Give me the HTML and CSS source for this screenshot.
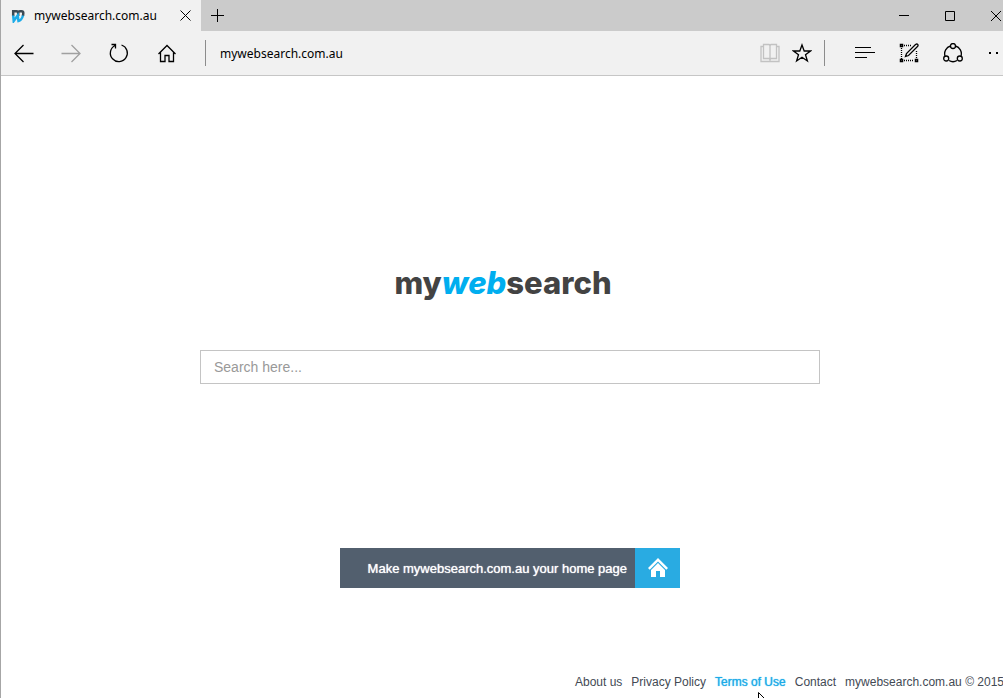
FILE: index.html
```html
<!DOCTYPE html>
<html lang="en">
<head>
  <meta charset="UTF-8">
  <meta name="viewport" content="width=device-width, initial-scale=1.0">
  <title>mywebsearch.com.au</title>
  <link rel="stylesheet" href="styles.css">
</head>
<body>
  <div class="window">
    <header>
      <div class="tab-bar">
        <div class="tab">
          <svg class="favicon" width="14" height="14" viewBox="0 0 14 14" fill="none" stroke-width="2.500">
            <path class="favicon-m" d="M2.200 7V2.200H5.500Q7.200 2.200 7.200 4V7M7.200 3.500Q7.500 2.200 9 2.200H10.500Q12.300 2.200 12.300 4L12 7"/>
            <path class="favicon-w" d="M2.200 6.500L2.700 12L6.700 6.500L7.500 12Q10.500 11.500 12 6.500"/>
          </svg>
          <span class="tab-title">mywebsearch.com.au</span>
          <button class="tab-close" aria-label="Close tab">
            <svg width="11" height="11" viewBox="0 0 11 11"><path d="M.5 .5L10.500 10.500M10.500 .5L.5 10.500"/></svg>
          </button>
        </div>
        <button class="new-tab" aria-label="New tab">
          <svg width="13" height="13" viewBox="0 0 13 13"><path d="M6.500 0V13M0 6.500H13"/></svg>
        </button>
        <div class="window-controls">
          <button aria-label="Minimize"><svg width="10" height="10" viewBox="0 0 10 10"><path d="M0 4.500H10"/></svg></button>
          <button aria-label="Maximize"><svg width="10" height="10" viewBox="0 0 10 10"><path d="M.5 .5H9.500V9.500H.5Z"/></svg></button>
          <button aria-label="Close"><svg width="10" height="10" viewBox="0 0 10 10"><path d="M0 0L10 10M10 0L0 10"/></svg></button>
        </div>
      </div>

      <div class="toolbar">
        <button class="nav-button" aria-label="Back">
          <svg width="20" height="20" viewBox="0 0 20 20"><path d="M19.500 10.500H1M9.500 2L1 10.500L9.500 19"/></svg>
        </button>
        <button class="nav-button disabled" aria-label="Forward" disabled>
          <svg width="20" height="20" viewBox="0 0 20 20"><path d="M.5 10.500H19M10.500 2L19 10.500L10.500 19"/></svg>
        </button>
        <button class="nav-button" aria-label="Refresh">
          <svg width="20" height="20" viewBox="0 0 20 20"><path d="M12.500 2A8.500 8.500 0 1 1 6 2.500M2.500 1.500H6.500V5.500"/></svg>
        </button>
        <button class="nav-button" aria-label="Home">
          <svg width="20" height="20" viewBox="0 0 20 20"><path d="M1.500 11L10 2.500L18.500 11M3.500 9V18.500H8V12.500H12V18.500H16.500V9"/></svg>
        </button>
        <span class="divider"></span>
        <input class="address" type="text" value="mywebsearch.com.au" aria-label="Address">
        <button class="small-button pale" aria-label="Reading view">
          <svg width="20" height="20" viewBox="0 0 20 20"><path d="M3.500 1.500H9L10 2.500L11 1.500H16.500V15.500H11L10 16.500L9 15.500H3.500ZM10 2.500V18M3.500 3.500H1V18.500H19V3.500H16.500"/></svg>
        </button>
        <button class="small-button" aria-label="Add to favorites">
          <svg width="20" height="20" viewBox="0 0 20 20"><path d="M10 2L12.200 8H18.500L13.500 11.800L15.400 18L10 14.300L4.600 18L6.500 11.800L1.500 8H7.800Z"/></svg>
        </button>
        <span class="divider"></span>
        <div class="tools">
          <button aria-label="Hub">
            <svg width="20" height="20" viewBox="0 0 20 20"><path d="M0 4.500H16M0 9.500H20M0 14.500H12" stroke-width="1"/></svg>
          </button>
          <button aria-label="Web note">
            <svg width="20" height="20" viewBox="0 0 20 20">
              <path d="M5 2.500H12M2.500 5V16M5 17.500H15M17.500 8V15" stroke-dasharray="1 1"/>
              <path d="M1.500 1.500H3.500V3.500H1.500ZM1.500 16.500H3.500V18.500H1.500ZM16.500 16.500H18.500V18.500H16.500Z" stroke-width="1.500"/>
              <path d="M6.500 13.500L7.500 10.500L16.500 1.500Q18 .5 18.700 1.500Q19.500 2.500 18.500 3.500L9.500 12.500Z"/>
            </svg>
          </button>
          <button aria-label="Share">
            <svg width="20" height="20" viewBox="0 0 20 20">
              <path d="M7.500 3A8 8 0 0 0 2 13M12.500 3A8 8 0 0 1 18 13M6 17.500Q10 20 14 17.500"/>
              <circle cx="10" cy="3" r="2.500"/><circle cx="3.200" cy="15.500" r="2.500"/><circle cx="16.800" cy="15.500" r="2.500"/>
            </svg>
          </button>
          <button aria-label="More">
            <svg width="18" height="20" viewBox="0 0 18 20"><path d="M1 10H3M8 10H10M15 10H17" stroke-width="2"/></svg>
          </button>
        </div>
      </div>
    </header>

    <main>
      <h1 class="logo">my<em>web</em>search</h1>
      <form class="search">
        <input type="text" placeholder="Search here..." aria-label="Search">
      </form>
      <button class="home-page">
        <span class="home-label">Make mywebsearch.com.au your home page</span>
        <span class="home-icon">
          <svg width="20" height="20" viewBox="0 0 20 20">
            <path d="M0 10L10 0L20 10L18.300 11.700L10 3.400L1.700 11.700Z"/>
            <path d="M3 12L10 5L17 12V19H12V13H8V19H3Z"/>
          </svg>
        </span>
      </button>
    </main>

    <footer>
      <a href="#">About us</a>
      <a href="#">Privacy Policy</a>
      <a href="#" class="current">Terms of Use</a>
      <a href="#">Contact</a>
      <span>mywebsearch.com.au © 2015</span>
    </footer>
  </div>
  <svg class="pointer" width="12" height="18" viewBox="0 0 12 18"><path d="M.5 .5V14L4 11L6 16L8 15L6 10H10Z"/></svg>
</body>
</html>
```
FILE: styles.css
```css
* {
  box-sizing: border-box;
}
body {
  margin: 0;
  overflow: hidden;
  position: relative;
  background-color: white;
  font-family: "Liberation Sans", Arial, sans-serif;
}
/* The window runs a little past the right edge of the screen */
.window {
  width: calc(100% + 16px);
  min-height: 100vh;
  display: flex;
  flex-direction: column;
  border-left: 1px solid #a6a6a6;
}
button {
  display: flex;
  align-items: center;
  justify-content: center;
  flex-shrink: 0;
  padding: 0;
  border: none;
  background: none;
  color: black;
}
header svg {
  fill: none;
  stroke: currentColor;
}
header {
  background-color: #f1f1f1;
  border-bottom: 1px solid #c6c6c6;
}
.tab-bar {
  display: flex;
  height: 31px;
  background-color: #cbcbcb;
}
.tab {
  display: flex;
  align-items: center;
  width: 200px;
  padding: 0 10px;
  background-color: #f1f1f1;
}
.favicon-m {
  stroke: #3c4a55;
}
.favicon-w {
  stroke: #1cabe8;
}
.tab-title {
  flex: 1;
  margin-left: 9px;
}
.tab-title, .address {
  font-family: "Noto Sans", "Open Sans", sans-serif;
  font-size: 12px;
  color: black;
}
.new-tab {
  width: 33px;
}
.window-controls {
  display: flex;
  margin-left: auto;
}
.window-controls button {
  width: 46px;
}
.toolbar {
  display: flex;
  align-items: center;
  height: 44px;
}
.toolbar svg {
  stroke-width: 1.3;
}
.nav-button {
  width: 48px;
  height: 44px;
}
.nav-button:first-child {
  width: 46px;
}
.disabled {
  color: #a0a0a0;
}
.divider {
  width: 1px;
  height: 26px;
  margin-left: 14px;
  background-color: #8c8c8c;
}
.address {
  flex: 1;
  min-width: 0;
  padding: 0 14px;
  border: none;
  outline: none;
  background: none;
}
.small-button {
  width: 32px;
}
.small-button + .divider {
  margin-left: 6px;
}
.pale {
  color: #c2c2c2;
}
.tools {
  display: flex;
  margin-left: 18px;
}
.tools button {
  width: 44px;
}
main {
  flex: 1;
  display: flex;
  flex-direction: column;
  align-items: center;
  padding: 188px 20px 0;
}
.logo {
  margin: 0 14px 0 0;
  font-family: Inter, "Liberation Sans", sans-serif;
  font-size: 31px;
  font-weight: 800;
  line-height: 38px;
  color: #434343;
}
.logo em {
  color: #00aeef;
}
.search {
  width: 100%;
  max-width: 620px;
  margin-top: 48px;
}
.search input {
  display: block;
  width: 100%;
  height: 34px;
  padding: 0 13px;
  border: 1px solid #c4c4c4;
  font-family: inherit;
  font-size: 14px;
}
.search input::placeholder {
  color: #999;
}
.home-page {
  width: 340px;
  height: 40px;
  margin-top: 164px;
  align-items: stretch;
  font-family: inherit;
  font-size: 13px;
  line-height: 42px;
  color: white;
  text-shadow: 0 0 1px white;
  background-color: #525f6e;
}
.home-label {
  flex: 1;
  padding-right: 8px;
  text-align: right;
}
.home-icon {
  display: flex;
  align-items: center;
  justify-content: center;
  width: 45px;
  background-color: #29abe2;
}
.home-icon svg {
  fill: white;
}
footer {
  display: flex;
  justify-content: flex-end;
  gap: 9px;
  padding: 0 15px 9px;
  font-size: 12px;
  line-height: 14px;
  color: #434a54;
}
footer a {
  color: inherit;
  text-decoration: none;
}
footer .current {
  color: #1cabe8;
  text-shadow: 0 0 1px #1cabe8;
}
/* Mouse pointer over the footer links */
.pointer {
  position: absolute;
  left: 758px;
  top: 692px;
  fill: white;
  stroke: black;
}
```
